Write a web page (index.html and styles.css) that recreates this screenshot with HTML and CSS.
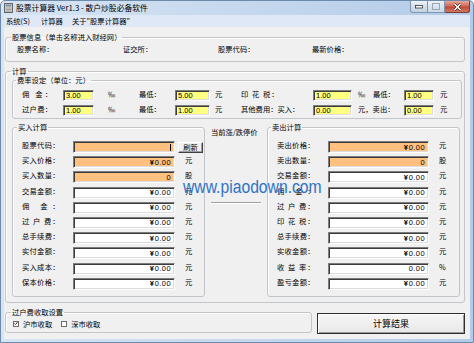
FILE: index.html
```html
<!DOCTYPE html>
<html lang="zh-CN">
<head>
<meta charset="utf-8">
<title>股票计算器</title>
<link rel="stylesheet" href="styles.css">
</head>
<body>
<div class="window">
  <div class="titlebar">
    <svg class="app-icon" width="9" height="10" viewBox="0 0 9 10">
      <rect x="0.5" y="0.5" width="8" height="9" fill="#dcdcdc" stroke="#666"/>
      <rect x="1.5" y="1.5" width="6" height="2" fill="#7a8ca2"/>
      <path d="M1.5 5h6M1.5 6.6h6M1.5 8.2h6" stroke="#8a8a8a" stroke-width="0.8"/>
    </svg>
    <span class="title">股票计算器 Ver1.3 - 散户炒股必备软件</span>
    <div class="controls">
      <span class="ctl ctl-min"><svg width="8" height="4" viewBox="0 0 8 4"><rect x="0.5" y="0.5" width="7" height="2.5" fill="#fff" stroke="#333" stroke-width="0.8"/></svg></span>
      <span class="ctl ctl-max"><svg width="8" height="7" viewBox="0 0 8 7"><rect x="0.5" y="0.5" width="7" height="6" fill="none" stroke="#9aa6b4" stroke-width="1"/></svg></span>
      <span class="ctl ctl-close"><svg width="9" height="8" viewBox="0 0 9 8"><path d="M1.5 1l6 6M7.5 1l-6 6" stroke="#3a1a14" stroke-width="2.6"/><path d="M1.5 1l6 6M7.5 1l-6 6" stroke="#fff" stroke-width="1.5"/></svg></span>
    </div>
  </div>

  <div class="client">
    <div class="menubar">
      <span class="menu m1">系统(S)</span>
      <span class="menu m2">计算器</span>
      <span class="menu m3">关于"股票计算器"</span>
    </div>

    <div class="form">
      <fieldset class="grp info">
        <legend>股票信息（单击名称进入财经网）</legend>
        <div class="info-row">
          <span class="info-l w1">股票名称：</span>
          <span class="info-l w2">证交所：</span>
          <span class="info-l w3">股票代码：</span>
          <span class="info-l">最新价格：</span>
        </div>
      </fieldset>

      <fieldset class="grp calc">
        <legend>计算</legend>
        <div class="calc-body">
          <fieldset class="grp fees">
            <legend>费率设定（单位：元）</legend>
            <div class="fee-grid">
              <span class="lbl j4">佣 金：</span>
              <div class="tb yellow"><span class="v">3.00</span></div>
              <span class="unit u1">‰</span>
              <span class="lbl">最低：</span>
              <div class="tb yellow"><span class="v">5.00</span></div>
              <span class="unit u2">元</span>
              <span class="lbl j5">印 花 税：</span>
              <div class="tb yellow"><span class="v">1.00</span></div>
              <span class="unit u3 split"><span class="permil">‰</span><span>最低：</span></span>
              <div class="tb yellow"><span class="v">1.00</span></div>
              <span class="unit u4">元</span>

              <span class="lbl j4">过户费：</span>
              <div class="tb yellow"><span class="v">1.00</span></div>
              <span class="unit u1">‰</span>
              <span class="lbl">最低：</span>
              <div class="tb yellow"><span class="v">1.00</span></div>
              <span class="unit u2">元</span>
              <span class="lbl">其他费用：买入：</span>
              <div class="tb yellow"><span class="v">0.00</span></div>
              <span class="unit u3">元，卖出：</span>
              <div class="tb yellow"><span class="v">0.00</span></div>
              <span class="unit u4">元</span>
            </div>
          </fieldset>

          <div class="trade-row">
            <fieldset class="grp trade buy">
              <legend>买入计算</legend>
              <div class="trade-grid buy-grid">
                <span class="lbl j5">股票代码：</span>
                <div class="tb orange r"><span class="caret"></span></div>
                <button class="refresh" type="button">刷新</button>

                <span class="lbl j5">买入价格：</span>
                <div class="tb orange r"><span class="v money"><b>¥</b>0.00</span></div>
                <span class="unit">元</span>

                <span class="lbl j5">买入数量：</span>
                <div class="tb orange r"><span class="v money">0</span></div>
                <span class="unit">股</span>

                <span class="lbl j5">交易金额：</span>
                <div class="tb r"><span class="v money"><b>¥</b>0.00</span></div>
                <span class="unit">元</span>

                <span class="lbl j5">佣 金：</span>
                <div class="tb r"><span class="v money"><b>¥</b>0.00</span></div>
                <span class="unit">元</span>

                <span class="lbl j5">过 户 费：</span>
                <div class="tb r"><span class="v money"><b>¥</b>0.00</span></div>
                <span class="unit">元</span>

                <span class="lbl j5">总手续费：</span>
                <div class="tb r"><span class="v money"><b>¥</b>0.00</span></div>
                <span class="unit">元</span>

                <span class="lbl j5">实付金额：</span>
                <div class="tb r"><span class="v money"><b>¥</b>0.00</span></div>
                <span class="unit">元</span>

                <span class="lbl j5">买入成本：</span>
                <div class="tb r"><span class="v money"><b>¥</b>0.00</span></div>
                <span class="unit">元</span>

                <span class="lbl j5">保本价格：</span>
                <div class="tb r"><span class="v money"><b>¥</b>0.00</span></div>
                <span class="unit">元</span>
              </div>
            </fieldset>

            <div class="limit">
              <span class="limit-title">当前涨/跌停价</span>
              <div class="sep"></div>
            </div>

            <fieldset class="grp trade sell">
              <legend>卖出计算</legend>
              <div class="trade-grid sell-grid">
                <span class="lbl j5">卖出价格：</span>
                <div class="tb orange r"><span class="v money"><b>¥</b>0.00</span></div>
                <span class="unit">元</span>

                <span class="lbl j5">卖出数量：</span>
                <div class="tb orange r"><span class="v money">0</span></div>
                <span class="unit">股</span>

                <span class="lbl j5">交易金额：</span>
                <div class="tb r"><span class="v money"><b>¥</b>0.00</span></div>
                <span class="unit">元</span>

                <span class="lbl j5">佣 金：</span>
                <div class="tb r"><span class="v money"><b>¥</b>0.00</span></div>
                <span class="unit">元</span>

                <span class="lbl j5">过 户 费：</span>
                <div class="tb r"><span class="v money"><b>¥</b>0.00</span></div>
                <span class="unit">元</span>

                <span class="lbl j5">印 花 税：</span>
                <div class="tb r"><span class="v money"><b>¥</b>0.00</span></div>
                <span class="unit">元</span>

                <span class="lbl j5">总手续费：</span>
                <div class="tb r"><span class="v money"><b>¥</b>0.00</span></div>
                <span class="unit">元</span>

                <span class="lbl j5">实收金额：</span>
                <div class="tb r"><span class="v money"><b>¥</b>0.00</span></div>
                <span class="unit">元</span>

                <span class="lbl j5">收 益 率：</span>
                <div class="tb r"><span class="v money">0.00</span></div>
                <span class="unit">%</span>

                <span class="lbl j5">盈亏金额：</span>
                <div class="tb r"><span class="v money"><b>¥</b>0.00</span></div>
                <span class="unit">元</span>
              </div>
            </fieldset>
          </div>
        </div>
      </fieldset>

      <div class="bottom-row">
        <fieldset class="grp transfer">
          <legend>过户费收取设置</legend>
          <div class="check-row">
            <span class="chk checked"><svg width="5" height="5" viewBox="0 0 5 5"><path d="M0.6 2.4l1.4 1.5 2.4-3.2" fill="none" stroke="#222" stroke-width="1.1"/></svg></span>
            <span class="chk-l">沪市收取</span>
            <span class="chk second"></span>
            <span class="chk-l">深市收取</span>
          </div>
        </fieldset>
        <button class="calc-btn" type="button">计算结果</button>
      </div>
    </div>
  </div>

  <div class="watermark">www.piaodown.com</div>
</div>
</body>
</html>
```

FILE: styles.css
```css
* { box-sizing: border-box; }
html, body { margin: 0; padding: 0; }
body {
  width: 474px;
  height: 343px;
  overflow: hidden;
  background: #ffffff;
  font-family: "Noto Sans CJK SC", "Noto Sans", sans-serif;
  font-size: 7.3px;
  color: #000;
}

.window {
  position: relative;
  width: 474px;
  height: 343px;
  display: flex;
  flex-direction: column;
  padding: 0 3px 3px;
  border: 1px solid #6d8aab;
  border-radius: 5px 5px 0 0;
  background: linear-gradient(90deg, #d6e4f4 0%, #c8daef 45%, #b3cbe8 100%);
}

/* title bar */
.titlebar {
  height: 14px;
  flex: none;
  display: flex;
  align-items: center;
}
.app-icon { flex: none; }
.title {
  margin-left: 3px;
  font-size: 7.8px;
  line-height: 14px;
  white-space: nowrap;
}
.controls {
  margin-left: auto;
  align-self: flex-start;
  display: flex;
  height: 12px;
}
.ctl {
  display: flex;
  align-items: center;
  justify-content: center;
  height: 12px;
  border: 1px solid #7f95b0;
  border-top: none;
}
.ctl-min {
  width: 18px;
  border-radius: 0 0 0 3px;
  background: linear-gradient(#eef3f9, #d3dfec 50%, #c2d2e4);
}
.ctl-max {
  width: 17px;
  border-left: none;
  background: linear-gradient(#eef3f9, #dae4ef 50%, #ccd9e7);
}
.ctl-close {
  width: 25px;
  border-left: none;
  border-color: #7b3b30;
  border-radius: 0 0 3px 0;
  background: linear-gradient(#e8a89a, #d06a58 45%, #c04a36 55%, #d27a62);
}

/* client */
.client {
  flex: 1;
  min-height: 0;
  display: flex;
  flex-direction: column;
}
.menubar {
  height: 12px;
  flex: none;
  display: flex;
  align-items: center;
  padding-left: 2px;
  background: #dfe8f6;
  line-height: 12px;
  white-space: nowrap;
}
.menu { display: block; }
.m1 { width: 35px; }
.m2 { width: 31px; }

.form {
  flex: 1;
  min-height: 0;
  background: #f0f0f0;
  padding: 0 5px 0 1px;
  display: flex;
  flex-direction: column;
}

/* group boxes */
.grp {
  margin: 0;
  padding: 0;
  min-width: 0;
  border: 1px solid #c2c5c9;
  border-radius: 3px;
  box-shadow: inset 1px 1px 0 #ffffff;
}
.grp > legend {
  margin-left: 5px;
  padding: 0 1px;
  line-height: 9px;
  font-size: 7.3px;
}

.info { margin-top: 6px; }
.info-row {
  display: flex;
  padding: 2px 0 7px 11px;
  line-height: 10px;
}
.info-l { display: block; white-space: nowrap; }
.w1 { width: 106px; }
.w2 { width: 95px; }
.w3 { width: 94px; }

.calc { margin-top: 5px; }
.calc-body { padding: 0 2px 5px 6px; }

.fees > legend { margin-left: 3px; }
.fee-grid {
  display: grid;
  grid-template-columns: 41px 31px 45px 36px 35px 31px 72px 39px 52px 30px auto;
  grid-template-rows: 11px 11px;
  row-gap: 4px;
  padding: 5px 0 2px 9px;
}

.lbl {
  display: block;
  align-self: start;
  line-height: 8px;
  white-space: nowrap;
}
.j4, .j5 {
  text-align: justify;
  text-align-last: justify;
  white-space: nowrap;
}
.j4 { width: 30px; }
.j5 { width: 37.5px; }

.unit {
  display: block;
  align-self: start;
  line-height: 8px;
  white-space: nowrap;
}
.fee-grid .u1 { padding-left: 14px; }
.fee-grid .u2 { padding-left: 5px; }
.fee-grid .u3 { padding-left: 6px; }
.fee-grid .u4 { padding-left: 6px; }
.split { display: flex; }
.permil { width: 15px; }

/* text boxes */
.tb {
  display: flex;
  align-items: center;
  height: 100%;
  background: #ffffff;
  border: 1px solid;
  border-color: #7c7c7c #ffffff #ffffff #7c7c7c;
  box-shadow: inset 1px 1px 0 #3c3c3c, inset -1px -1px 0 #dcdcdc;
  padding: 0 2px;
  overflow: hidden;
}
.tb.yellow { background: #ffff80; }
.tb.orange { background: #ffc080; }
.tb.r { justify-content: flex-end; padding-right: 3px; }
.v {
  font-family: "Liberation Sans", Arial, sans-serif;
  font-size: 7.5px;
  line-height: 9px;
  white-space: nowrap;
}
.money { letter-spacing: 0.4px; }
.money b { font-weight: 700; letter-spacing: 0.8px; }
.caret {
  display: block;
  width: 1px;
  height: 7px;
  background: #000;
}

/* buy / sell */
.trade-row {
  display: flex;
  margin-top: 4px;
}
.trade { flex: none; width: 193px; }
.buy > legend { margin-left: 4px; }
.sell > legend { margin-left: 3px; }
.trade-grid {
  display: grid;
  grid-template-rows: repeat(10, 12px);
  row-gap: 3.2px;
  padding: 9px 0 6px 9px;
}
.buy-grid { grid-template-columns: 51px 102px auto; }
.sell-grid { grid-template-columns: 51px 101px auto; }
.trade-grid .unit { padding-left: 10px; }

.refresh {
  align-self: start;
  margin: 1px 0 0 3px;
  width: 25px;
  height: 11px;
  padding: 0;
  font-family: inherit;
  font-size: 7.3px;
  line-height: 9px;
  color: #000;
  background: #f0f0f0;
  border: 1px solid;
  border-color: #ffffff #404040 #404040 #ffffff;
  box-shadow: inset -1px -1px 0 #a0a0a0;
}

.limit {
  flex: none;
  width: 62px;
  padding: 4px 0 0 6px;
}
.limit-title {
  display: block;
  line-height: 10px;
  white-space: nowrap;
}
.sep {
  width: 50px;
  height: 2px;
  margin-top: 65px;
  border-top: 1px solid #a0a0a0;
  border-bottom: 1px solid #ffffff;
}

/* bottom */
.bottom-row {
  display: flex;
  align-items: flex-start;
  margin-top: 5px;
}
.transfer { width: 307px; flex: none; }
.check-row {
  display: flex;
  align-items: center;
  height: 10px;
  margin: 2px 0 3px 7px;
}
.chk {
  flex: none;
  display: flex;
  align-items: center;
  justify-content: center;
  width: 6px;
  height: 6px;
  border: 1px solid #6a6a6a;
  background: #ffffff;
}
.chk.second { margin-left: 9px; }
.chk-l {
  margin-left: 4px;
  line-height: 10px;
  white-space: nowrap;
}
.calc-btn {
  flex: none;
  width: 148px;
  height: 21px;
  margin: 5px 0 0 5px;
  padding: 0;
  font-family: inherit;
  font-size: 9px;
  color: #000;
  background: linear-gradient(#f6f6f6, #e8e8e8);
  border: 1px solid #2e2e2e;
  box-shadow: inset 1px 1px 0 #ffffff, inset -1px -1px 0 #9a9a9a;
}

/* watermark overlay */
.watermark {
  position: absolute;
  left: 182px;
  top: 179px;
  font-family: "Liberation Sans", Arial, sans-serif;
  font-size: 15.7px;
  line-height: 16px;
  color: #2f73c6;
  white-space: nowrap;
  transform: scaleY(1.15);
  transform-origin: 0 13.4px;
  pointer-events: none;
}
```
